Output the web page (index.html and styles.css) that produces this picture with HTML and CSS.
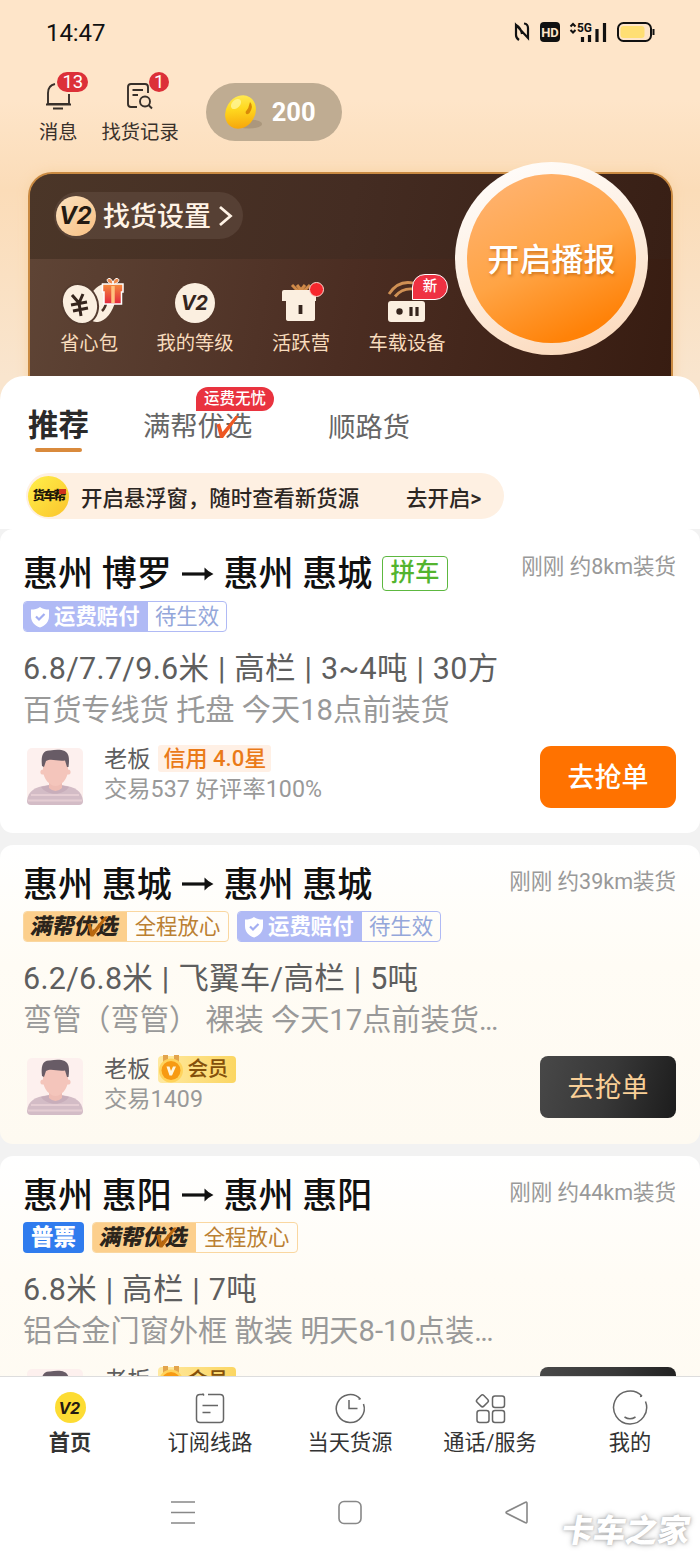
FILE: index.html
```
<!DOCTYPE html>
<html lang="zh-CN">
<head>
<meta charset="utf-8">
<title>找货</title>
<link rel="stylesheet" href="styles.css">
</head>
<body>
<svg class="defs" width="0" height="0">
  <defs>
    <linearGradient id="coin" x1="0" y1="0" x2=".6" y2="1"><stop offset="0" stop-color="#fff06a"/><stop offset=".5" stop-color="#ffd91f"/><stop offset="1" stop-color="#f7a80c"/></linearGradient>
    <linearGradient id="gift" x1="0" y1="0" x2="0" y2="1"><stop offset="0" stop-color="#f58b3c"/><stop offset="1" stop-color="#e3273f"/></linearGradient>
    <symbol id="arrow" viewBox="0 0 32 16"><path d="M0 8H25" stroke="#111" stroke-width="3.2"/><path d="M22.500 1.500Q26 5.500 31.500 8Q26 10.500 22.500 14.500Z" fill="#111"/></symbol>
    <symbol id="shield" viewBox="0 0 20 22"><path d="M10 1C12.500 3 15.500 3.500 19 3.500V10C19 16 15.500 19.500 10 21.500C4.500 19.500 1 16 1 10V3.500C4.500 3.500 7.500 3 10 1Z" fill="#fff"/><path d="M6 10.500L9 13.500L14.500 8" fill="none" stroke="#a3aef2" stroke-width="2.200"/></symbol>
    <symbol id="check" viewBox="0 0 24 24"><path d="M1.500 9.500L5 8.500L7.500 17L20.500 1H24L8 23H5Z"/></symbol>
    <symbol id="avatar" viewBox="0 0 56 57">
      <rect width="56" height="57" rx="5" fill="#fdf0ee"/>
      <path d="M0 53C1 43 8 38.500 20 37.500H36C48 38.500 55 43 56 53Q56 57 52 57H4Q0 57 0 53Z" fill="#d3bcc6"/>
      <path d="M4 47H52M1 52.500H55" stroke="#e5cdd3" stroke-width="1.800"/>
      <path d="M14 39C20 48 36 48 42 39L34 37H22Z" fill="#c8aebb"/>
      <path d="M22 34H35V40Q28.500 46 22 40Z" fill="#efbdb4"/>
      <circle cx="16" cy="24" r="2.600" fill="#f4c5bb"/><circle cx="41" cy="24" r="2.600" fill="#f4c5bb"/>
      <path d="M16 11H41V22C41 31 34 38 28.500 38S16 31 16 22Z" fill="#f4c5bb"/>
      <path d="M15 18C14 9 15 2 23 2.500C31 1 40 1 41.500 8Q42.500 12 41.500 19H40L38 12.500C30 13.500 24 10 19 13L17 19Z" fill="#685c66"/>
    </symbol>
    <symbol id="medal" viewBox="0 0 26 30"><path d="M5 1H10V8H5ZM16 1H21V8H16Z" fill="#e3a44c"/><circle cx="13" cy="16.500" r="12" fill="#ffd35c"/><circle cx="13" cy="16.500" r="9.500" fill="#f79a13"/><path d="M8.500 12.500H11.500L13 17L15 12.500H18L14 21.500H11.500Z" fill="#fff5dc"/></symbol>
  </defs>
</svg>

<main class="phone">
  <header class="hero">
    <div class="status">
      <span class="clock">14:47</span>
      <svg class="status-icons" width="144" height="24" viewBox="0 0 144 24">
        <path d="M6 20Q3 18 3 15V5L15 18V8Q15 4 11 3.500M3 5Q8 8 9 14" fill="none" stroke="#111" stroke-width="2.200"/>
        <rect x="27" y="2" width="20" height="20" rx="4" fill="#111"/>
        <text class="hd-label" x="37" y="16.700" text-anchor="middle">HD</text>
        <path d="M57.500 6.500L60 4L62.500 6.500M57.500 10L60 12.500L62.500 10" fill="none" stroke="#111" stroke-width="2"/>
        <text class="net-label" x="64" y="12" textLength="15" lengthAdjust="spacingAndGlyphs">5G</text>
        <path d="M69.500 17V22M76.500 15V22M84 9V22M91.500 3V22" stroke="#111" stroke-width="3.200"/>
        <rect x="105" y="3" width="33" height="18" rx="5.500" fill="none" stroke="#111" stroke-width="2"/>
        <rect x="107.500" y="6" width="24" height="12" rx="3" fill="#ffdf73"/>
        <path d="M140.500 9V15" stroke="#111" stroke-width="2"/>
      </svg>
    </div>

    <div class="shortcuts">
      <div class="shortcut msg">
        <div class="icon-wrap">
          <svg width="26" height="28" viewBox="0 0 26 28" fill="none" stroke="#38302a" stroke-width="1.900"><path d="M10 2C5 3 3 7 3 11V22H24V12M1 22.500H26M8 26.500H18"/></svg>
          <span class="badge wide">13</span>
        </div>
        <span>消息</span>
      </div>
      <div class="shortcut record">
        <div class="icon-wrap">
          <svg width="28" height="28" viewBox="0 0 28 28" fill="none" stroke="#38302a" stroke-width="1.900"><path d="M11 25H5Q2 25 2 22V5Q2 2 5 2H19Q22 2 22 5V11M6.500 8H17M6.500 13H12"/><circle cx="19" cy="19.500" r="5"/><path d="M22.500 23L26 26.500"/></svg>
          <span class="badge">1</span>
        </div>
        <span>找货记录</span>
      </div>
      <div class="coins">
        <svg width="42" height="40" viewBox="0 0 42 40"><ellipse cx="26" cy="32" rx="13" ry="4.500" fill="#937f64" opacity=".45"/><ellipse cx="17.500" cy="20" rx="14.500" ry="17.500" transform="rotate(32 17.500 20)" fill="url(#coin)"/><path d="M27 10Q31 14 26.500 21Q23 24 22.500 20Q26 16 27 10Z" fill="#d98a08"/><ellipse cx="13" cy="12" rx="6" ry="4" transform="rotate(-45 13 12)" fill="#fff9a8" opacity=".7"/></svg>
        <strong>200</strong>
      </div>
    </div>

    <section class="panel">
      <div class="panel-top">
        <div class="setting"><i class="v2 gold">V2</i><span>找货设置</span><svg width="16" height="24" viewBox="0 0 16 24"><path d="M2 3L12.500 12L2 21" fill="none" stroke="#fff3e6" stroke-width="2.800"/></svg></div>
      </div>
      <div class="panel-menu">
        <div class="entry">
          <svg width="64" height="52" viewBox="0 0 64 52">
            <ellipse cx="41" cy="27" rx="13" ry="20" transform="rotate(24 41 27)" fill="#fbefe0"/><path d="M46 26Q46 31 42 35" fill="none" stroke="#4a3227" stroke-width="2.500"/>
            <ellipse cx="20" cy="28" rx="17.500" ry="20.500" transform="rotate(-25 20 28)" fill="#fbefe0" stroke="#543c30" stroke-width="2"/>
            <path d="M12 19L19 27L23 18M19 27L21 40M11 29L27 26M13 35L28 32" fill="none" stroke="#35251d" stroke-width="3"/>
            <path d="M42.500 8H63V16H61.500V28H44V16H42.500Z" fill="url(#gift)" stroke="#fff" stroke-width="1.500"/><path d="M53 8C47 8 45 2 50 2.500Q53 4 53 8Q53 4 56 2.500C61 2 59 8 53 8Z" fill="#ee8a4d" stroke="#fff"/><path d="M53 10V27" stroke="#ffc17f" stroke-width="3.500"/>
          </svg>
          <span>省心包</span>
        </div>
        <div class="entry"><i class="v2 cream">V2</i><span>我的等级</span></div>
        <div class="entry">
          <svg width="48" height="52" viewBox="0 0 48 52"><path d="M15 9L21 15M33 9L27 15M20 9L24 14L28 9" fill="none" stroke="#d18a48" stroke-width="3"/><path d="M7 14H37Q39 14 39 16V25H38V43Q38 45 35 45H12Q9 45 9 43V25H5V16Q5 14 7 14Z" fill="#fbefe0"/><path d="M23.500 29V38" stroke="#35251d" stroke-width="3.800"/><circle cx="39.500" cy="13.500" r="7" fill="#f7272d" stroke="#fbd9cf" stroke-width="1"/></svg>
          <span>活跃营</span>
        </div>
        <div class="entry">
          <svg width="48" height="52" viewBox="0 0 48 52"><path d="M6 18Q15 4 30 7M12 20.500Q19 12 30 13" fill="none" stroke="#cf9054" stroke-width="2.800"/><rect x="5" y="25" width="37" height="21" rx="3" fill="#fbefe0"/><circle cx="16.500" cy="35.500" r="3.200" fill="#35251d"/><path d="M28 31V40M34 31V40" stroke="#35251d" stroke-width="3.200"/></svg>
          <b class="new">新</b>
          <span>车载设备</span>
        </div>
      </div>
      <div class="broadcast"><span>开启播报</span></div>
    </section>
  </header>

  <section class="sheet">
    <nav class="tabs">
      <span class="tab active">推荐</span>
      <span class="tab second">满帮优选<svg class="tick" width="24" height="26"><use href="#check" fill="#ee5722"/></svg><b class="bubble">运费无忧</b></span>
      <span class="tab">顺路货</span>
    </nav>
    <div class="tip">
      <span class="tip-logo">货车帮<i></i></span>
      <span class="tip-text">开启悬浮窗，随时查看新货源</span>
      <span class="tip-go">去开启&gt;</span>
    </div>
  </section>

  <section class="feed">
    <article class="card first">
      <div class="title"><span class="place">惠州 博罗</span><svg width="32" height="16"><use href="#arrow"/></svg><span class="place">惠州 惠城</span><b class="share">拼车</b><time>刚刚 约8km装货</time></div>
      <div class="tags"><span class="tag blue"><b><svg width="20" height="22"><use href="#shield"/></svg>运费赔付</b><em>待生效</em></span></div>
      <p class="spec">6.8/7.7/9.6米 | 高栏 | 3~4吨 | 30方</p>
      <p class="desc">百货专线货 托盘 今天18点前装货</p>
      <div class="foot">
        <svg class="face" width="56" height="57"><use href="#avatar"/></svg>
        <div class="boss"><div class="name">老板<b class="credit">信用 4.0星</b></div><div class="deal">交易537 好评率100%</div></div>
        <button class="grab">去抢单</button>
      </div>
    </article>

    <article class="card warm">
      <div class="title"><span class="place">惠州 惠城</span><svg width="32" height="16"><use href="#arrow"/></svg><span class="place">惠州 惠城</span><time>刚刚 约39km装货</time></div>
      <div class="tags">
        <span class="tag amber"><b><i>满帮优选</i><svg class="tick" width="22" height="25"><use href="#check" fill="#b9680f"/></svg></b><em>全程放心</em></span>
        <span class="tag blue"><b><svg width="20" height="22"><use href="#shield"/></svg>运费赔付</b><em>待生效</em></span>
      </div>
      <p class="spec">6.2/6.8米 | 飞翼车/高栏 | 5吨</p>
      <p class="desc">弯管（弯管） 裸装 今天17点前装货<span class="dots">...</span></p>
      <div class="foot">
        <svg class="face" width="56" height="57"><use href="#avatar"/></svg>
        <div class="boss"><div class="name">老板<b class="vip"><svg width="26" height="30"><use href="#medal"/></svg>会员</b></div><div class="deal">交易1409</div></div>
        <button class="grab dark"><span>去抢单</span></button>
      </div>
    </article>

    <article class="card warm">
      <div class="title"><span class="place">惠州 惠阳</span><svg width="32" height="16"><use href="#arrow"/></svg><span class="place">惠州 惠阳</span><time>刚刚 约44km装货</time></div>
      <div class="tags">
        <span class="invoice">普票</span>
        <span class="tag amber"><b><i>满帮优选</i><svg class="tick" width="22" height="25"><use href="#check" fill="#b9680f"/></svg></b><em>全程放心</em></span>
      </div>
      <p class="spec">6.8米 | 高栏 | 7吨</p>
      <p class="desc">铝合金门窗外框 散装 明天8-10点装<span class="dots">...</span></p>
      <div class="foot">
        <svg class="face" width="56" height="57"><use href="#avatar"/></svg>
        <div class="boss"><div class="name">老板<b class="vip"><svg width="26" height="30"><use href="#medal"/></svg>会员</b></div></div>
        <button class="grab dark"></button>
      </div>
    </article>
  </section>

  <nav class="tabbar">
    <div class="item on"><i class="v2 yellow">V2</i><span>首页</span></div>
    <div class="item"><svg width="36" height="36" viewBox="0 0 36 36"><path d="M16 4.500H28Q31.500 4.500 31.500 8V29Q31.500 32.500 28 32.500H8Q4.500 32.500 4.500 29V8Q4.500 4.500 8 4.500H11.500M10.500 3.500L12 5.500M10.500 15.500H26M10.500 22.500H18.500"/></svg><span>订阅线路</span></div>
    <div class="item"><svg width="36" height="36" viewBox="0 0 36 36"><path d="M28.500 9A14 14 0 1 0 31.500 14M28.500 9L26.500 9M17 10V18.500H25.500"/></svg><span>当天货源</span></div>
    <div class="item"><svg width="36" height="36" viewBox="0 0 36 36"><rect x="5.500" y="6" width="9.500" height="9.500" rx="2" transform="rotate(45 10.250 11)"/><rect x="20.500" y="6" width="12" height="11.500" rx="2.500"/><rect x="5" y="20.500" width="12" height="12" rx="2.500"/><rect x="20.500" y="20.500" width="12" height="12" rx="2.500"/></svg><span>通话/服务</span></div>
    <div class="item"><svg width="36" height="36" viewBox="0 0 36 36"><path d="M30 6A16.500 16.500 0 1 0 33.500 11.500M30 6L28 6.500M12.500 27Q18 30.500 23.500 27"/></svg><span>我的</span></div>
  </nav>
  <footer class="sysbar">
    <svg width="28" height="28" viewBox="0 0 28 28"><path d="M2 4H26M2 14.500H26M2 25H26"/></svg>
    <svg width="28" height="28" viewBox="0 0 28 28"><rect x="3" y="3.500" width="22" height="22" rx="5"/></svg>
    <svg width="28" height="28" viewBox="0 0 28 28"><path d="M24 5.500V23.500Q24 25.500 22 24.500L4 15.500Q2 14.500 4 13.500L22 4.500Q24 3.500 24 5.500Z"/></svg>
    <span class="watermark">卡车之家</span>
  </footer>
</main>
</body>
</html>
```
FILE: styles.css
```
* { box-sizing: border-box; }
body { margin: 0; font-family: Roboto, "Noto Sans CJK SC", sans-serif; color: #222; }
p { margin: 0; }
svg { display: block; flex: none; }
span, b, strong, time, em { white-space: nowrap; }
.defs { position: absolute; }
.phone { width: 700px; height: 1555px; display: flex; flex-direction: column; background: #fff; overflow: hidden; }

.hero { height: 400px; margin-bottom: -24px; flex: none; background: linear-gradient(#fee5c9 0, #fee5c9 100px, #fbdcb8 190px, #f9e5ce 376px); }
.status { height: 64px; display: flex; justify-content: space-between; align-items: center; padding: 0 43px 0 46px; }
.clock { font-size: 24px; color: #111; padding-top: 1px; letter-spacing: -.1px; }
.hd-label { font: bold 13px Roboto, sans-serif; fill: #fee5c9; }
.net-label { font: bold 13px Roboto, sans-serif; fill: #111; }

.shortcuts { height: 108px; display: flex; align-items: flex-start; padding: 17px 0 0 39px; }
.shortcut { display: flex; flex-direction: column; align-items: center; font-size: 19.300px; line-height: 24px; color: #38302a; }
.shortcut.record { margin-left: 24px; }
.icon-wrap { position: relative; height: 40px; }
.icon-wrap svg { margin-top: 1px; }
.badge { position: absolute; left: 22px; top: -9px; width: 20px; height: 20px; border-radius: 10px; background: #dc3038; color: #fff; font-size: 18.500px; line-height: 21px; text-align: center; }
.badge.wide { left: 12px; width: 31px; }
.record .badge { left: 23px; }
.coins { margin: 2px 0 0 27px; width: 136px; height: 58px; border-radius: 29px; background: #bfac92; display: flex; align-items: center; padding-left: 17px; gap: 7px; color: #fff; font-size: 25.500px; }
.coins strong { font-weight: 700; }

.v2 { display: flex; align-items: center; justify-content: center; border-radius: 50%; font: italic 700 20px Inter, "Liberation Sans", sans-serif; letter-spacing: -.5px; color: #241a12; padding-right: 2px; }
.v2.gold { width: 40px; height: 40px; background: linear-gradient(135deg, #fbe2c0, #f9c082); font-size: 24px; }
.v2.cream { width: 40px; height: 40px; margin: 7px 0 5px; background: #fbefe0; color: #35251d; }
.v2.yellow { width: 31px; height: 31px; margin: 2px 0 3px; background: #fddc33; font-size: 16px; }

.panel { position: relative; width: 645px; height: 228px; margin-left: 28px; border: 2px solid #c98a42; border-bottom: 0; border-radius: 24px 24px 0 0; background: linear-gradient(100deg, #5f4536, #4b2d22 50%, #371c11); box-shadow: 0 0 12px #f8d4a6; }
.panel-top { height: 85px; border-radius: 22px 22px 0 0; background: linear-gradient(100deg, #4b3628, #442c22 50%, #381f15); padding: 18px 0 0 24px; }
.setting { width: 189px; height: 47px; padding-left: 2px; border-radius: 24px; background: #65504480; display: flex; align-items: center; color: #fff3e6; font-size: 27px; line-height: 40px; font-weight: 500; }
.setting span { margin: 2px 7px 0 7px; }
.panel-menu { display: flex; padding-left: 6px; }
.entry { position: relative; width: 106px; display: flex; flex-direction: column; align-items: center; padding-top: 17px; color: #f8dcbd; font-size: 19.300px; line-height: 26px; }
.entry > span { margin-top: 3px; }
.entry:first-child svg { margin-left: 6px; }
.new { position: absolute; left: 58px; top: 15px; width: 36px; height: 26px; border: 1.500px solid #fff; border-radius: 13px 13px 13px 0; background: #ef3142; color: #fff; font-size: 14.500px; line-height: 24px; text-align: center; font-weight: 500; }
.broadcast { position: absolute; left: 425px; top: -12px; width: 193px; height: 193px; border-radius: 50%; padding: 12px; background: linear-gradient(160deg, #fff, #fdeee0 50%, #fbd5b4); }
.broadcast span { display: flex; height: 169px; align-items: center; justify-content: center; padding-bottom: 4px; border-radius: 50%; background: linear-gradient(155deg, #ffb577, #ffa445 50%, #ff8208 85%); color: #fff; font-size: 32px; font-weight: 500; text-shadow: 1px 2px 3px #b35b0c99; }

.sheet { position: relative; flex: none; height: 153px; background: #fff; border-radius: 24px 24px 0 0; }
.tabs { height: 97px; display: flex; align-items: flex-start; padding: 28px 0 0 28px; font-size: 27.300px; line-height: 48px; color: #666; }
.tab { position: relative; }
.tab.active { width: 62px; font-size: 30.500px; line-height: 44px; font-weight: 700; color: #2a2a2a; }
.tab.active::after { content: ""; display: block; width: 47px; height: 4px; margin: 0 0 0 7px; border-radius: 2px; background: #d98a3c; }
.tab.second { margin: 0 76px 0 53px; line-height: 46px; }
.tab.second .tick { position: absolute; left: 72px; top: 10px; }
.bubble { position: absolute; left: 53px; top: -17px; width: 78px; height: 24px; border-radius: 12px 12px 12px 0; background: #e9333f; color: #fff; font-size: 15.500px; line-height: 25px; text-align: center; font-weight: 500; }
.tip { width: 478px; height: 46px; margin-left: 26px; border-radius: 23px; background: #fef0e2; display: flex; align-items: center; padding-left: 2px; font-size: 21.400px; font-weight: 500; color: #2c2622; }
.tip-logo { position: relative; width: 41px; height: 41px; border-radius: 50%; background: linear-gradient(135deg, #fff04a, #fbc42c); font-size: 12.500px; line-height: 39px; text-align: center; font-weight: 900; letter-spacing: -1.800px; color: #1d1808; }
.tip-logo i { position: absolute; right: 3px; top: 13px; width: 7px; height: 5px; background: #d0321d; }
.tip-text { margin-left: 12px; }
.tip-go { margin-left: 47px; }

.feed { flex: none; height: 847px; overflow: hidden; background: #f2f2f2; display: flex; flex-direction: column; gap: 12px; }
.card { flex: none; height: 299px; padding: 18px 24px 0 23px; border-radius: 13px; background: #fff; }
.card.first { height: 304px; padding-top: 24px; }
.card.warm { background: linear-gradient(#fff, #fffcf5 40%, #fefaf1); }
.title { height: 44px; display: flex; align-items: center; font-size: 35px; line-height: 44px; font-weight: 500; color: #111; }
.title > svg { margin: -3px 10px 0; }
.place { width: 148.500px; padding-top: 1px; }
.first .place { padding-top: 0; }
.share { margin-left: 10px; width: 66px; height: 35px; margin-top: -4px; border: 1.500px solid #5db840; border-radius: 4px; color: #53b42f; font-size: 24.500px; line-height: 32px; text-align: center; font-weight: 500; }
.title time { margin: -7px 0 0 auto; font-size: 21.500px; font-weight: 400; color: #999; }
.first .title time { margin-top: -17px; }
.tags { height: 31px; margin-top: 4px; display: flex; gap: 8px; }
.tag { display: flex; font-size: 21.400px; line-height: 30px; border: 1.500px solid; border-radius: 4px; overflow: hidden; }
.tag em { font-style: normal; text-align: center; }
.tag b { display: flex; align-items: center; position: relative; }
.tag.blue { width: 204px; border-color: #b0baf5; }
.tag.blue b { width: 124px; padding-left: 6px; gap: 4px; background: #b0baf5; color: #fff; }
.tag.blue em { flex: 1; color: #94a7da; }
.tag.amber { width: 206px; border-color: #fad7a0; }
.tag.amber b { width: 103px; padding-left: 7px; background: #fccf8c; color: #2b241b; font-weight: 900; }
.tag.amber i { font-style: normal; transform: skewX(-12deg); font-size: 22px; }
.tag.amber .tick { position: absolute; left: 62px; top: 2px; }
.tag.amber em { flex: 1; color: #bb8032; }
.invoice { width: 61px; height: 31px; border-radius: 4px; background: #307cee; color: #fff; font-size: 22.500px; line-height: 31px; font-weight: 900; text-align: center; }
.spec { margin-top: 15px; height: 42px; font-size: 30.500px; line-height: 43px; letter-spacing: .3px; word-spacing: .8px; color: #5e5e5e; white-space: nowrap; }
.desc { height: 42px; font-size: 29.200px; line-height: 42px; color: #999; white-space: nowrap; }
.dots { letter-spacing: -1.700px; }
.foot { display: flex; margin-top: 15px; }
.face { margin: 2px 0 0 4px; }
.boss { flex: 1; padding-left: 21px; font-size: 23.200px; color: #999; line-height: 30px; }
.deal { letter-spacing: .1px; }
.name { display: flex; align-items: center; height: 26px; color: #5e5e5e; margin-bottom: 2px; }
.credit { height: 27px; margin: -1px 0 0 8px; padding: 0 5px; border-radius: 3px; background: #fff0e5; color: #ea7a18; font-size: 22.100px; line-height: 27px; font-weight: 500; }
.vip { width: 78px; height: 27px; margin-left: 8px; border-radius: 4px; background: linear-gradient(90deg, #ffe9a0, #fbd662); color: #84500b; display: flex; align-items: center; gap: 3px; font-size: 20.500px; line-height: 27px; font-weight: 500; }
.grab { width: 136px; height: 62px; border: 0; border-radius: 11px; padding: 0 0 3px; background: #ff7200; color: #fff; font: 500 27px Roboto, "Noto Sans CJK SC", sans-serif; }
.grab.dark { border-radius: 8px; background: linear-gradient(105deg, #484848, #383838 50%, #1c1c1c); color: #f9cf97; font-weight: 400; }

.tabbar { flex: none; height: 104px; padding-top: 13px; border-top: 1px solid #ddd; display: grid; grid-template-columns: repeat(5, 140px); }
.item { display: flex; flex-direction: column; align-items: center; font-size: 21.200px; line-height: 32px; color: #333; }
.item > span { margin-top: 1px; }
.item svg { fill: none; stroke: #666; stroke-width: 1.500; }
.item.on { font-weight: 700; }
.sysbar { position: relative; flex: 1; display: flex; justify-content: center; gap: 139px; padding-top: 18px; }
.sysbar svg { fill: none; stroke: #888; stroke-width: 1.600; }
.watermark { position: absolute; right: 10px; bottom: 3px; font-size: 32px; line-height: 42px; font-weight: 900; color: #fff; transform: skewX(-10deg); text-shadow: 0 0 3px #aaa, 0 0 6px #bbb; }
```
